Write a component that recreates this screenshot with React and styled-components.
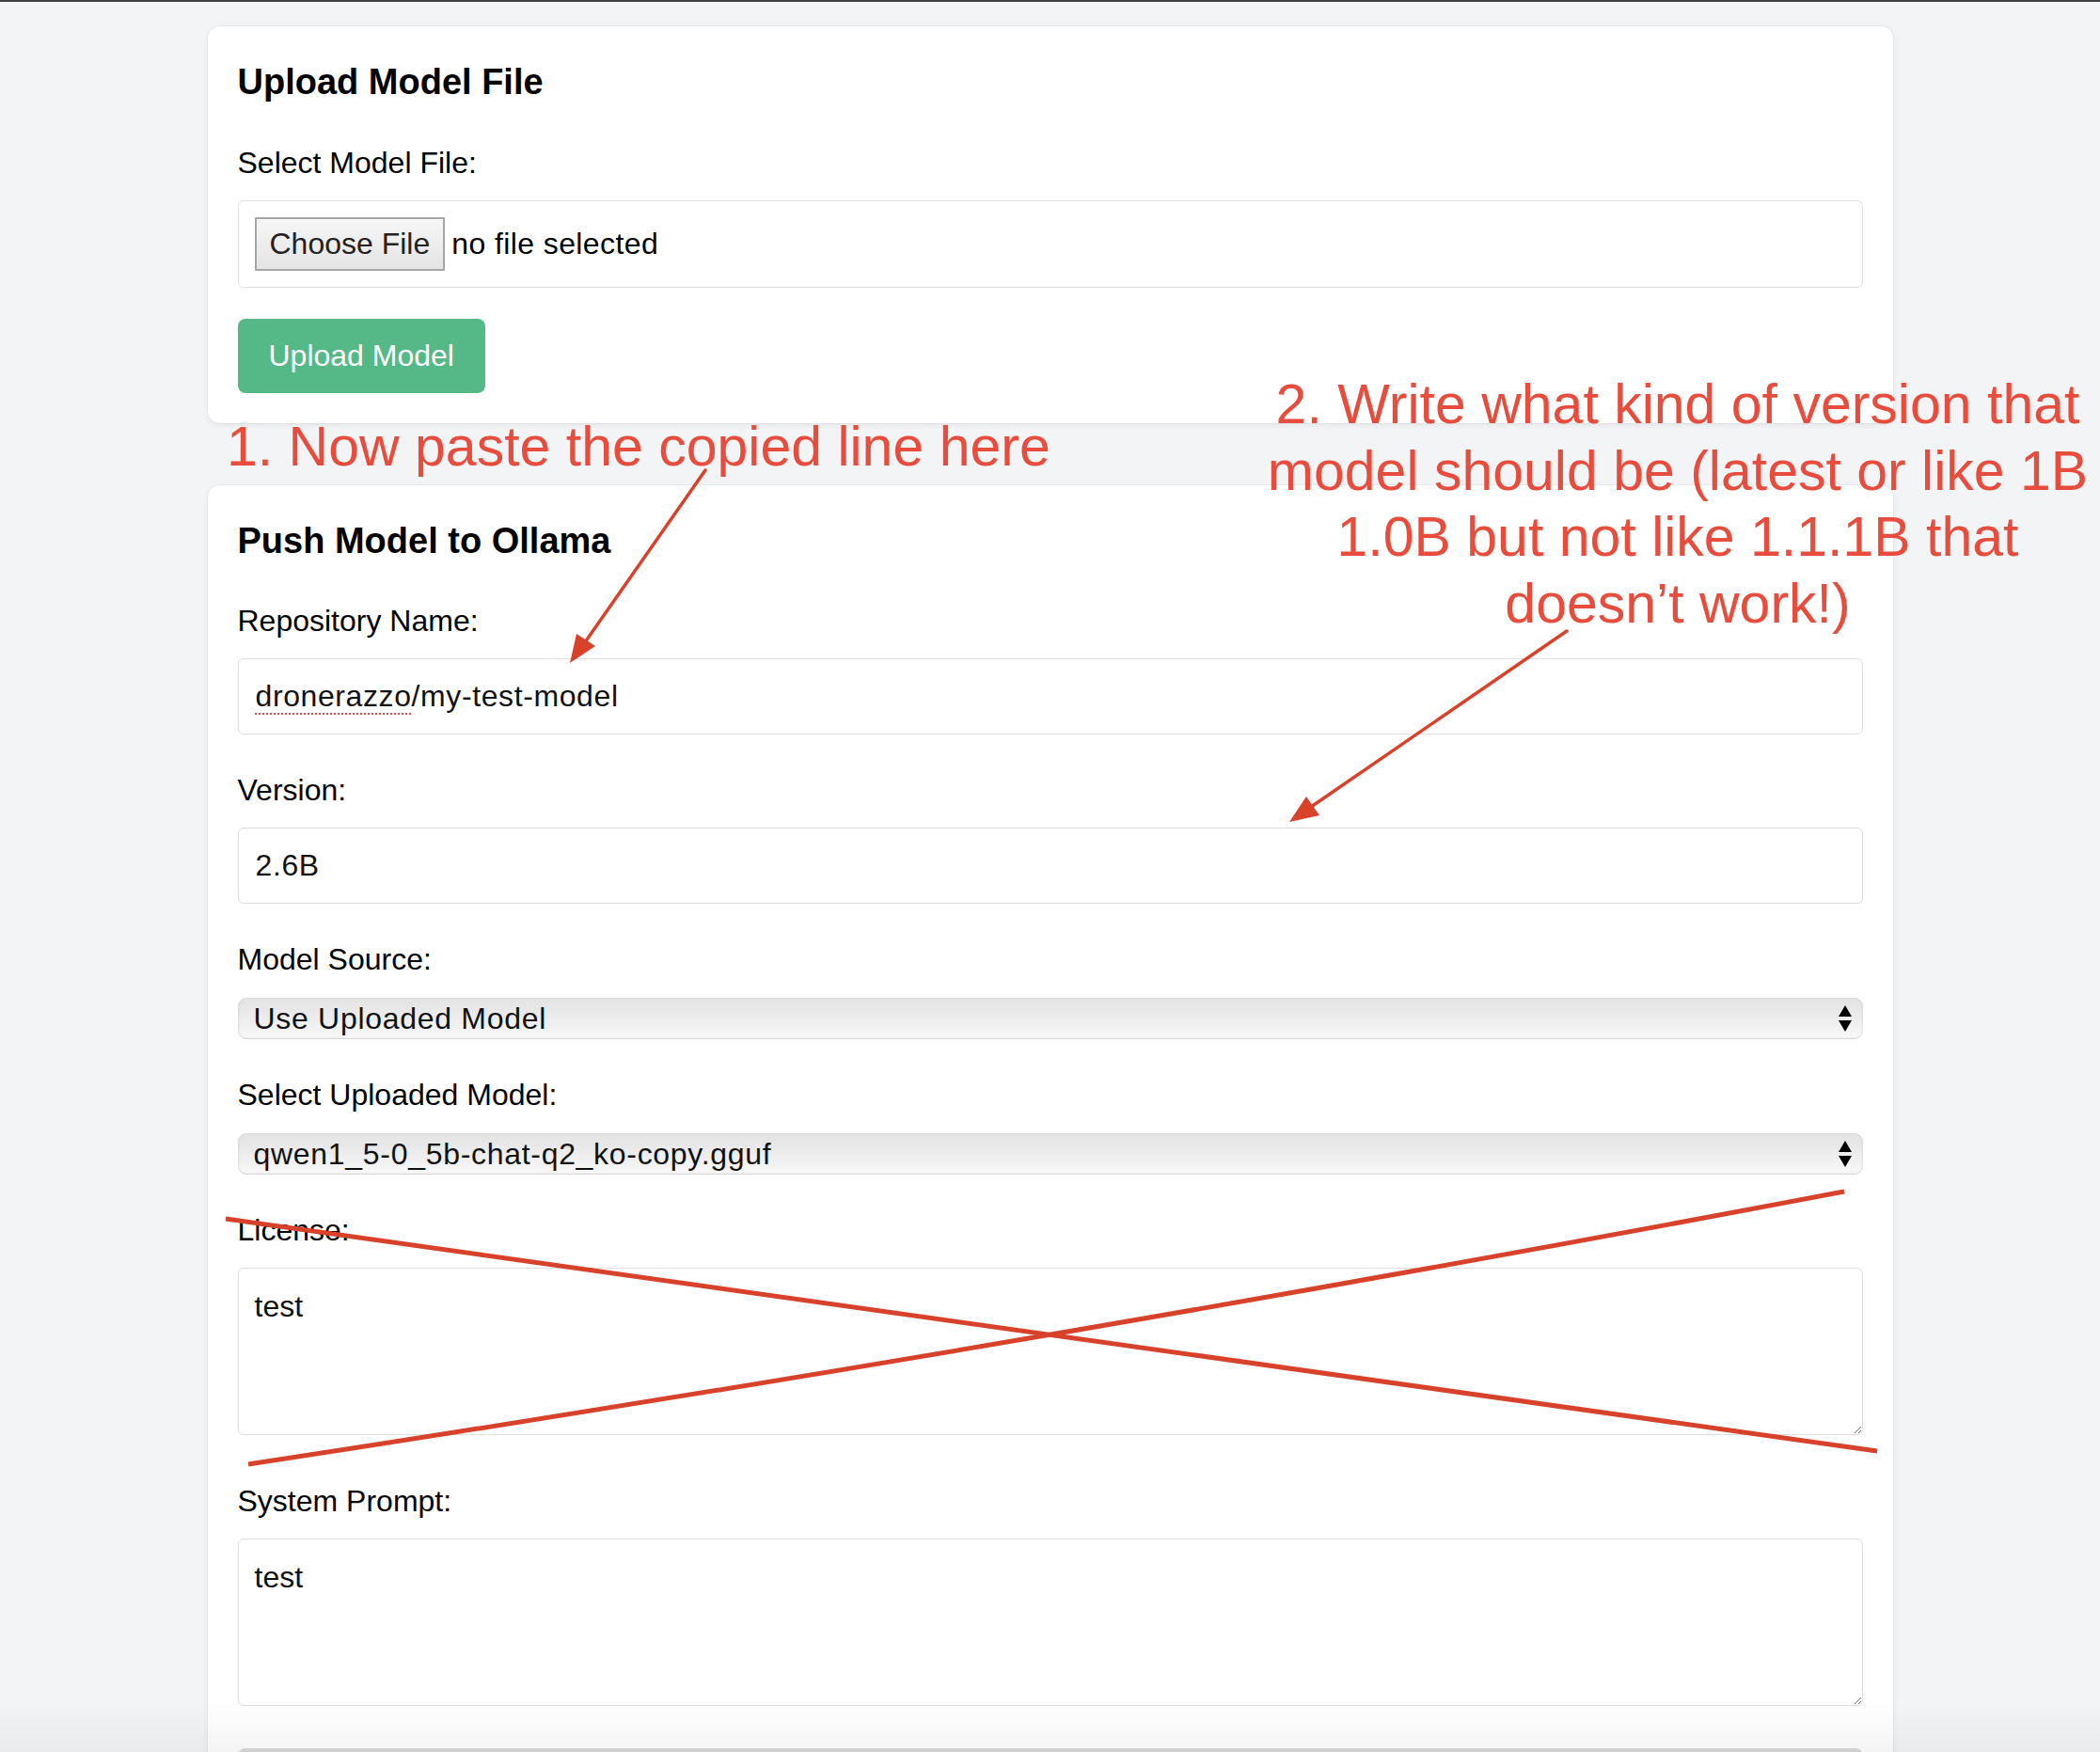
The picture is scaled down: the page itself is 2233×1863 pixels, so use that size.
import React from 'react';
import styled, { createGlobalStyle } from 'styled-components';

const GlobalStyle = createGlobalStyle`
    html, body {
        margin: 0;
        padding: 0;
        overflow: hidden;
    }
    body {
        background: #f3f4f6;
        font-family: "Liberation Sans", Arial, Helvetica, sans-serif;
        color: #111;
    }
    * {
        box-sizing: border-box;
    }
`;

const Page = styled.div`
    position: relative;
    height: 1863px;
    overflow: hidden;
    border-top: 2px solid #3f3f3f;
    padding-top: 26px;
`;

const Container = styled.div`
    width: 1792px;
    margin: 0 auto;
    display: flex;
    flex-direction: column;
    gap: 66px;
`;

const Card = styled.section`
    background: #fff;
    border-radius: 13px;
    padding: 37px 32px 32px;
    box-shadow: 0 0 0 1px rgba(0, 0, 0, 0.025), 0 2px 6px rgba(0, 0, 0, 0.07);
`;

const Title = styled.h2`
    margin: 0 0 43px;
    font-size: 38px;
    font-weight: 700;
    line-height: 1.2;
    color: #000;
`;

const FormGroup = styled.div`
    margin-bottom: ${props => props.$gap || 40}px;
`;

const Label = styled.label`
    display: block;
    font-size: 32px;
    line-height: 38px;
    margin-bottom: ${props => props.$gap || 21}px;
    color: #000;
`;

const FileBox = styled.div`
    display: flex;
    align-items: center;
    gap: 7px;
    height: 93px;
    padding: 0 17px;
    border: 1px solid #e0e0e0;
    border-radius: 6px;
    margin-bottom: 33px;
    font-size: 32px;
`;

const ChooseButton = styled.span`
    display: inline-flex;
    align-items: center;
    height: 57px;
    padding: 0 14px;
    border: 2px solid #a6a6a6;
    border-radius: 1px;
    background: linear-gradient(#f6f6f6, #e4e4e4);
    color: #222;
    font-size: 32px;
`;

const FileName = styled.span`
    color: #000;
    letter-spacing: 0.4px;
`;

const PrimaryButton = styled.button`
    display: inline-block;
    height: 79px;
    padding: 0 33px;
    border: none;
    border-radius: 8px;
    background: #55b887;
    color: #fff;
    font-family: inherit;
    font-size: 32px;
`;

const TextBox = styled.div`
    display: flex;
    align-items: center;
    height: 81px;
    padding: 0 18px;
    border: 1px solid #dedede;
    border-radius: 6px;
    background: #fff;
    font-size: 32px;
    letter-spacing: 0.6px;
    color: #111;
`;

const Misspelled = styled.span`
    text-decoration: underline dotted #e0564c;
    text-decoration-thickness: 2px;
    text-underline-offset: 7px;
`;

const SelectWrap = styled.div`
    position: relative;
`;

const Select = styled.select`
    display: block;
    width: 100%;
    height: 44px;
    padding: 0 40px 0 17px;
    appearance: none;
    border: none;
    border-bottom: 1px solid #d6d6d6;
    border-radius: 9px;
    background: linear-gradient(#e3e3e3 0%, #ebebeb 45%, #f8f8f8 100%);
    box-shadow: inset 1px 0 2px rgba(0, 0, 0, 0.08), inset -1px 0 2px rgba(0, 0, 0, 0.06);
    font-family: inherit;
    font-size: 32px;
    letter-spacing: 0.7px;
    color: #111;
`;

const SelectArrows = styled.svg`
    position: absolute;
    right: 12px;
    top: 8px;
    pointer-events: none;
`;

const TextArea = styled.textarea`
    display: block;
    width: 100%;
    height: 178px;
    padding: 22px 17px;
    border: 1px solid #dedede;
    border-radius: 6px;
    font-family: inherit;
    font-size: 32px;
    color: #111;
    background: #fff;
    outline: none;
`;

// cut off by the bottom edge of the screenshot
const NextControl = styled.div`
    height: 79px;
    border-radius: 8px;
    background: #d9d9d9;
`;

// screenshot markup drawn on top of the form
const Markup = styled.svg`
    position: absolute;
    top: 0;
    left: 0;
    pointer-events: none;
    z-index: 3;
`;

const Note = styled.div`
    position: absolute;
    left: ${props => props.$x}px;
    top: ${props => props.$y}px;
    width: ${props => props.$w ? props.$w + 'px' : 'auto'};
    text-align: ${props => props.$center ? 'center' : 'left'};
    white-space: nowrap;
    font-size: 59px;
    line-height: 70.5px;
    color: #e74c3c;
    z-index: 4;
`;

const BottomFade = styled.div`
    position: absolute;
    left: 0;
    right: 0;
    top: 1805px;
    height: 58px;
    background: linear-gradient(rgba(0, 0, 0, 0), rgba(0, 0, 0, 0.045));
    pointer-events: none;
    z-index: 2;
`;

const Arrows = () => (
    <SelectArrows width="14" height="28" viewBox="0 0 14 28">
        <polygon points="7,0 14,12 0,12" fill="#000" />
        <polygon points="0,16 14,16 7,28" fill="#000" />
    </SelectArrows>
);

const SelectField = ({ label, value }) => (
    <FormGroup>
        <Label $gap={22}>{label}</Label>
        <SelectWrap>
            <Select defaultValue={value}>
                <option value={value}>{value}</option>
            </Select>
            <Arrows />
        </SelectWrap>
    </FormGroup>
);

const RED = '#d8412a';

export default function App() {
    return (
        <>
            <GlobalStyle />
            <Page>
                <Container>
                    <Card>
                        <Title>Upload Model File</Title>
                        <Label>Select Model File:</Label>
                        <FileBox>
                            <ChooseButton>Choose File</ChooseButton>
                            <FileName>no file selected</FileName>
                        </FileBox>
                        <PrimaryButton>Upload Model</PrimaryButton>
                    </Card>

                    <Card>
                        <Title>Push Model to Ollama</Title>
                        <FormGroup>
                            <Label>Repository Name:</Label>
                            <TextBox>
                                <Misspelled>dronerazzo</Misspelled>/my-test-model
                            </TextBox>
                        </FormGroup>
                        <FormGroup>
                            <Label>Version:</Label>
                            <TextBox>2.6B</TextBox>
                        </FormGroup>
                        <SelectField label="Model Source:" value="Use Uploaded Model" />
                        <SelectField label="Select Uploaded Model:" value="qwen1_5-0_5b-chat-q2_ko-copy.gguf" />
                        <FormGroup $gap={51}>
                            <Label>License:</Label>
                            <TextArea defaultValue="test" />
                        </FormGroup>
                        <FormGroup $gap={45}>
                            <Label>System Prompt:</Label>
                            <TextArea defaultValue="test" />
                        </FormGroup>
                        <NextControl />
                    </Card>
                </Container>

                <Note $x={241} $y={438}>1. Now paste the copied line here</Note>
                <Note $x={1284} $y={393} $w={1000} $center>
                    2. Write what kind of version that<br />
                    model should be (latest or like 1B<br />
                    1.0B but not like 1.1.1B that<br />
                    doesn’t work!)
                </Note>

                <Markup width="2233" height="1863" viewBox="0 0 2233 1863">
                    <line x1="750" y1="498" x2="622" y2="681" stroke={RED} strokeWidth="3.5" strokeLinecap="round" />
                    <polygon points="606,703 633,685 613,672" fill={RED} />
                    <line x1="1666" y1="669" x2="1394" y2="856" stroke={RED} strokeWidth="3.5" strokeLinecap="round" />
                    <polygon points="1371,872 1403,865 1389,845" fill={RED} />
                    <line x1="240" y1="1294" x2="1996" y2="1541" stroke={RED} strokeWidth="5" />
                    <path d="M264 1555 Q1123 1424 1961 1265" fill="none" stroke={RED} strokeWidth="5" />
                </Markup>

                <BottomFade />
            </Page>
        </>
    );
}
